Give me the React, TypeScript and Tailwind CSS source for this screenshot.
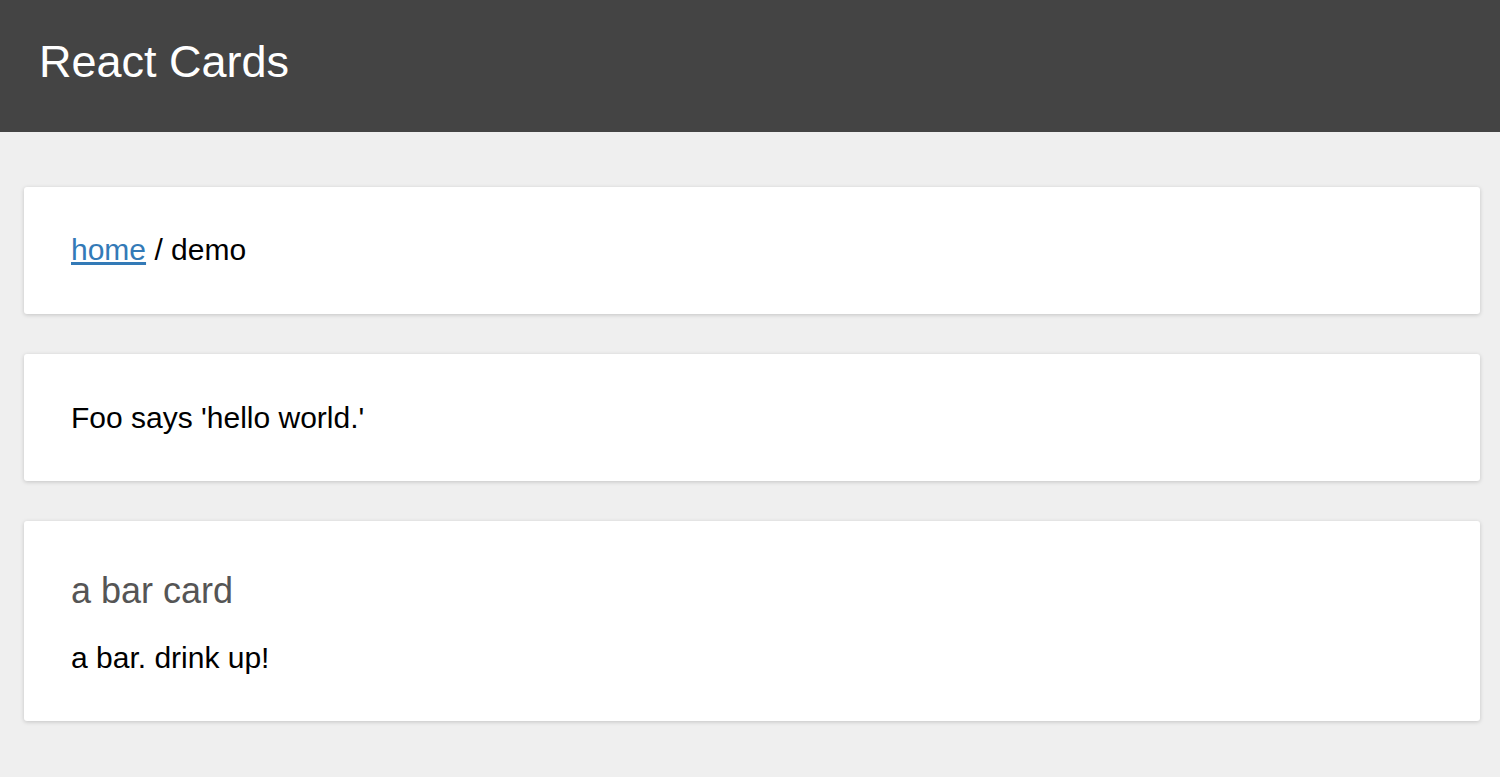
import React from "react";

type CardProps = {
  children: React.ReactNode;
};

const Card = ({ children }: CardProps) => {
  return (
    <div className="bg-white rounded-[3px] px-[47px] py-[46px] shadow-[0_1px_4px_rgba(0,0,0,0.18)]">
      {children}
    </div>
  );
};

const App = () => {
  return (
    <div
      className="min-h-[777px] bg-[#efefef] text-black"
      style={{ fontFamily: '"Liberation Sans", Arial, sans-serif' }}
    >
      <header className="h-[132px] bg-[#444444] flex items-center pl-[39px] pb-[9px]">
        <h1 className="text-[45px] leading-[52px] text-white">React Cards</h1>
      </header>

      <main className="flex flex-col gap-[40px] pl-[24px] pr-[20px] pt-[55px] pb-[56px]">
        <Card>
          <p className="text-[30px] leading-[35px] -mt-[1px] mb-[1px]">
            <a href="#" className="text-[#337ab7] underline">
              home
            </a>{" "}
            / demo
          </p>
        </Card>

        <Card>
          <p className="text-[30px] leading-[35px]">Foo says 'hello world.'</p>
        </Card>

        <Card>
          <h2 className="mt-[3px] text-[36px] leading-[41px] text-[#555555]">a bar card</h2>
          <p className="mt-[29px] text-[30px] leading-[35px]">a bar. drink up!</p>
        </Card>
      </main>
    </div>
  );
};

export default App;
